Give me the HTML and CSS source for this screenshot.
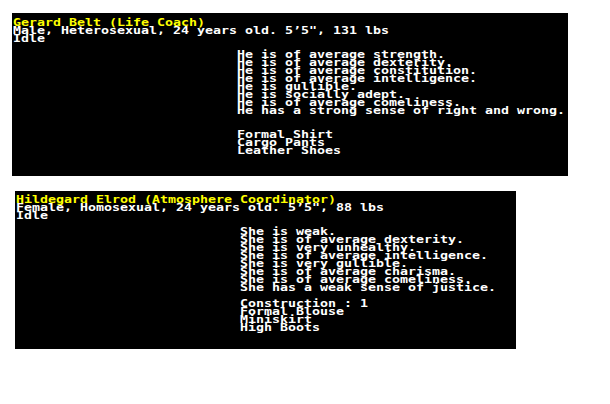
FILE: index.html
```html
<!DOCTYPE html>
<html>
<head>
<meta charset="utf-8">
<link rel="stylesheet" href="styles.css">
</head>
<body>
<div class="page">
  <section class="card card-gerard">
    <div class="txt">
      <div class="name">Gerard Belt (Life Coach)</div>
      <div class="line">Male, Heterosexual, 24 years old. 5’5", 131 lbs</div>
      <div class="line">Idle</div>
      <div class="details">
        <div class="line">He is of average strength.</div>
        <div class="line">He is of average dexterity.</div>
        <div class="line">He is of average constitution.</div>
        <div class="line">He is of average intelligence.</div>
        <div class="line">He is gullible.</div>
        <div class="line">He is socially adept.</div>
        <div class="line">He is of average comeliness.</div>
        <div class="line">He has a strong sense of right and wrong.</div>
        <div class="gap"></div>
        <div class="skills"></div>
        <div class="line">Formal Shirt</div>
        <div class="line">Cargo Pants</div>
        <div class="line">Leather Shoes</div>
      </div>
    </div>
  </section>
  <section class="card card-hildegard">
    <div class="txt">
      <div class="name">Hildegard Elrod (Atmosphere Coordinator)</div>
      <div class="line">Female, Homosexual, 24 years old. 5’5", 88 lbs</div>
      <div class="line">Idle</div>
      <div class="details">
        <div class="line">She is weak.</div>
        <div class="line">She is of average dexterity.</div>
        <div class="line">She is very unhealthy.</div>
        <div class="line">She is of average intelligence.</div>
        <div class="line">She is very gullible.</div>
        <div class="line">She is of average charisma.</div>
        <div class="line">She is of average comeliness.</div>
        <div class="line">She has a weak sense of justice.</div>
        <div class="gap"></div>
        <div class="line">Construction : 1</div>
        <div class="line">Formal Blouse</div>
        <div class="line">Miniskirt</div>
        <div class="line">High Boots</div>
      </div>
    </div>
  </section>
</div>
</body>
</html>
```
FILE: styles.css
```css
html, body {
  margin: 0;
  padding: 0;
  background: #ffffff;
}

.page {
  display: flex;
  flex-direction: column;
  align-items: flex-start;
  padding-top: 13px;
  gap: 15px;
}

.card {
  background: #000000;
  color: #ffffff;
  box-sizing: border-box;
  overflow: hidden;
  padding-left: 1px;
}

.card-gerard {
  margin-left: 12px;
  width: 556px;
  height: 163px;
  padding-top: 6px;
}

.card-hildegard {
  margin-left: 15px;
  width: 501px;
  height: 158px;
  padding-top: 5px;
}

.txt {
  font-family: "DejaVu Sans Mono", monospace;
  font-weight: bold;
  font-size: 10px;
  line-height: 8px;
  transform: scaleX(1.3288);
  transform-origin: 0 0;
}

.name,
.line {
  height: 8px;
  white-space: pre;
}

.name {
  color: #ffff00;
}

.details {
  margin-left: 28ch;
  margin-top: 8px;
}

.gap,
.skills {
  height: 8px;
}
```
